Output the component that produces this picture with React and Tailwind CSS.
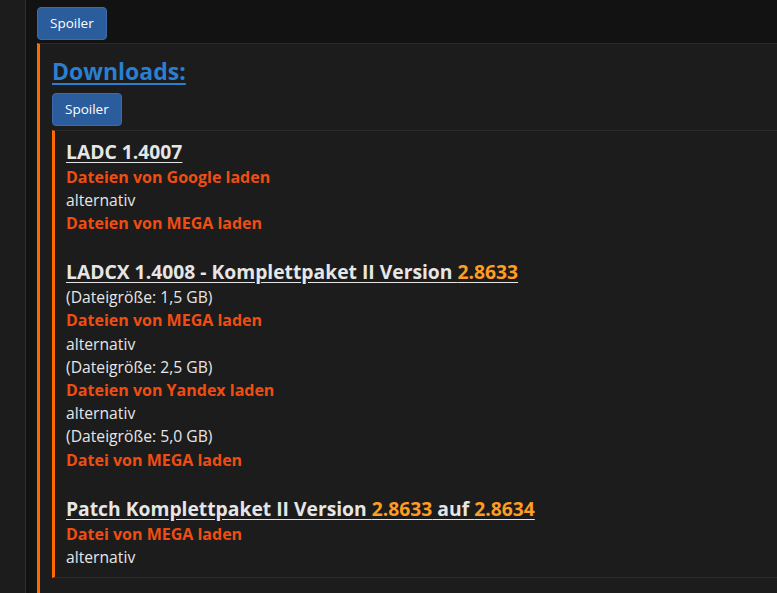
import React from "react";

const Spoiler = ({ className = "" }) => (
  <button
    className={
      "bg-[#2b5c9c] border border-[#3a6cae] text-white text-[13.5px] rounded-[4px] px-[12px] h-[33px] leading-none " +
      className
    }
  >
    Spoiler
  </button>
);

const Link = ({ children }) => (
  <div className="font-bold text-[16px] text-[#f04d12]">{children}</div>
);

const Heading = ({ children, className = "" }) => (
  <div
    className={
      "text-[19.3px] font-bold text-[#e6e6e6] underline underline-offset-[3px] leading-[28px] " +
      className
    }
  >
    {children}
  </div>
);

const Ver = ({ children }) => <span className="text-[#ff9c22]">{children}</span>;

const App = () => {
  return (
    <div
      className="flex h-[593px] w-[777px] overflow-hidden bg-[#121212] text-[15.7px] leading-[23.2px] text-[#e6e6e6]"
      style={{ fontFamily: '"Open Sans", "Noto Sans", sans-serif' }}
    >
      <div className="w-[26px] shrink-0 bg-[#1c1c1c] border-r border-[#2e2e2e]" />
      <div className="flex-1 min-w-0 pl-[11px] pt-[7px]">
        <Spoiler className="h-[32px]" />
        <div className="mt-[3px] border-l-[3px] border-[#ff6a00] border-t border-t-[#2b2b2b] bg-[#1c1c1c] pl-[12px] pt-[11px] pb-[16px]">
          <div className="text-[23px] font-bold text-[#2b7fd0] underline underline-offset-[3px] leading-[32px]">
            Downloads:
          </div>
          <Spoiler className="mt-[6px]" />
          <div className="mt-[4px] border-l-[3px] border-[#ff6a00] border-t border-b border-t-[#2b2b2b] border-b-[#2b2b2b] pl-[11px] pt-[7px] pb-[7.5px]">
            <Heading>LADC 1.4007</Heading>
            <Link>Dateien von Google laden</Link>
            <div>alternativ</div>
            <Link>Dateien von MEGA laden</Link>

            <Heading className="mt-[22.5px]">
              LADCX 1.4008 - Komplettpaket II Version <Ver>2.8633</Ver>
            </Heading>
            <div>(Dateigröße: 1,5 GB)</div>
            <Link>Dateien von MEGA laden</Link>
            <div>alternativ</div>
            <div>(Dateigröße: 2,5 GB)</div>
            <Link>Dateien von Yandex laden</Link>
            <div>alternativ</div>
            <div>(Dateigröße: 5,0 GB)</div>
            <Link>Datei von MEGA laden</Link>

            <Heading className="mt-[23.4px]">
              Patch Komplettpaket II Version <Ver>2.8633</Ver> auf <Ver>2.8634</Ver>
            </Heading>
            <Link>Datei von MEGA laden</Link>
            <div>alternativ</div>
          </div>
        </div>
      </div>
    </div>
  );
};

export default App;
